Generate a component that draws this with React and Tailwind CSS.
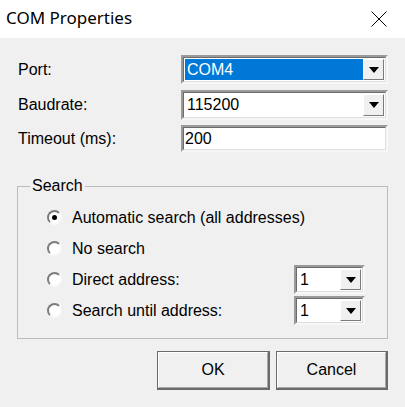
import React from 'react';

const sans = "font-['Liberation_Sans',Arial,sans-serif]";

// classic sunken 3D frame used by edit boxes and combos
const Sunken = ({ className = '', children }) => (
  <div className={`border-2 border-t-[#9a9a9a] border-l-[#9a9a9a] border-b-[#f7f7f7] border-r-[#f7f7f7] ${className}`}>
    <div className="w-full h-full border border-t-[#6c6c6c] border-l-[#6c6c6c] border-b-[#dedede] border-r-[#dedede] bg-white flex items-center">
      {children}
    </div>
  </div>
);

const DropButton = () => (
  <div className="w-[21px] h-full ml-auto flex items-center justify-center bg-[#f0f0f0] border border-t-white border-l-white border-b-[#7a7a7a] border-r-[#7a7a7a]">
    <svg width="10" height="6" viewBox="0 0 10 6">
      <path d="M0 0h10L5 6z" fill="#000" />
    </svg>
  </div>
);

const Combo = ({ value, selected, className }) => (
  <Sunken className={className}>
    <div className="flex items-stretch w-full h-full p-[1px]">
      <div className={`flex-1 flex items-center pl-[2px] ${selected ? 'bg-[#0078d7] text-white' : 'text-black'}`}>
        {value}
      </div>
      <DropButton />
    </div>
  </Sunken>
);

const Radio = ({ checked, label, children }) => (
  <div className="h-[31px] flex items-center">
    <span className="w-[15px] h-[15px] rounded-full border-2 border-t-[#7c7c7c] border-l-[#7c7c7c] border-b-[#f8f8f8] border-r-[#f8f8f8] bg-white flex items-center justify-center shrink-0">
      {checked && <span className="w-[5px] h-[5px] rounded-full bg-black" />}
    </span>
    <span className="ml-[10px] text-black">{label}</span>
    {children}
  </div>
);

const Button = ({ label, className = '' }) => (
  <button className={`h-[39px] border border-[#6a6a6a] border-b-2 border-r-2 bg-[#f0f0f0] ${className}`}>
    <div className="w-full h-full border border-t-white border-l-white border-b-[#a8a8a8] border-r-[#a8a8a8] flex items-center justify-center text-black">
      {label}
    </div>
  </button>
);

export default function App() {
  return (
    <div className={`w-[405px] h-[407px] bg-[#f0f0f0] overflow-hidden ${sans} text-[16px]`}>
      {/* title bar */}
      <div className="h-[38px] bg-white flex items-center justify-between pl-[6px] pr-[18px]">
        <span className="font-['Noto_Sans',sans-serif] text-[17px] text-black pb-[2px]">COM Properties</span>
        <svg width="16" height="16" viewBox="0 0 16 16" className="mb-[1px]">
          <path d="M0.5 0.5L15.5 15.5M15.5 0.5L0.5 15.5" stroke="#000" strokeWidth="1" />
        </svg>
      </div>

      <div className="pt-[17px]">
        <div className="flex items-center h-[29px]">
          <span className="w-[181px] pl-[18px]">Port:</span>
          <Combo value="COM4" selected className="w-[207px] h-[29px]" />
        </div>
        <div className="flex items-center h-[30px] mt-[6px]">
          <span className="w-[181px] pl-[18px]">Baudrate:</span>
          <Combo value="115200" className="w-[207px] h-[30px]" />
        </div>
        <div className="flex items-center h-[27px] mt-[5px]">
          <span className="w-[181px] pl-[18px]">Timeout (ms):</span>
          <Sunken className="w-[207px] h-[27px]">
            <span className="pl-[1px]">200</span>
          </Sunken>
        </div>

        <fieldset className="ml-[17px] w-[371px] mt-[25px] border border-[#bcbcbc] pl-[12px] pr-[22px] pb-[12px] pt-[7px]">
          <legend className="px-[2px] leading-[18px]">Search</legend>
          <div className="pl-[17px]">
            <Radio checked label="Automatic search (all addresses)" />
            <Radio label="No search" />
            <Radio label="Direct address:">
              <Combo value="1" className="w-[71px] h-[29px] ml-auto" />
            </Radio>
            <Radio label="Search until address:">
              <Combo value="1" className="w-[71px] h-[29px] ml-auto" />
            </Radio>
          </div>
        </fieldset>

        <div className="flex justify-end gap-[6px] pr-[17px] mt-[12px]">
          <Button label="OK" className="w-[113px]" />
          <Button label="Cancel" className="w-[112px]" />
        </div>
      </div>
    </div>
  );
}
